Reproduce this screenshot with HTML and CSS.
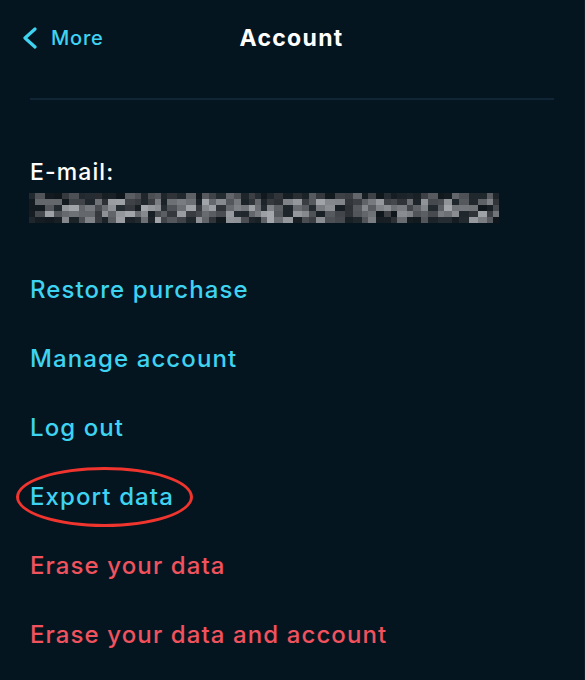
FILE: index.html
```html
<!DOCTYPE html>
<html lang="en">
<head>
<meta charset="utf-8">
<title>Account</title>
<link rel="stylesheet" href="styles.css">
</head>
<body>
<div class="screen">
  <header class="topbar">
    <div class="bar">
      <a class="back" href="#">
        <svg class="chev" width="14" height="22" viewBox="0 0 14 22"><polyline points="12,2 2,11 12,20" fill="none" stroke="#3fd3f2" stroke-width="3.2" stroke-linecap="round" stroke-linejoin="round"/></svg>
        <span>More</span>
      </a>
      <h1 class="title">Account</h1>
      <span class="spacer"></span>
    </div>
  </header>
  <section class="email">
    <div class="label">E-mail:</div>
    <canvas id="mosaic" class="mosaic" width="470" height="30"></canvas>
  </section>
  <ul class="actions">
    <li class="item cyan">Restore purchase</li>
    <li class="item cyan">Manage account</li>
    <li class="item cyan">Log out</li>
    <li class="item cyan marked">Export data<span class="ring"></span></li>
    <li class="item red">Erase your data</li>
    <li class="item red">Erase your data and account</li>
  </ul>
</div>
<script src="script.js"></script>
</body>
</html>
```
FILE: styles.css
```css
html, body {
  margin: 0;
  padding: 0;
  background: #051520;
}
.screen {
  width: 585px;
  height: 680px;
  overflow: hidden;
  background: #051520;
  font-family: Inter, "Noto Sans", sans-serif;
  border-right: 1px solid #0c1e2a;
  box-sizing: border-box;
}
.topbar {
  height: 98px;
  margin: 0 30px 0 30px;
  border-bottom: 2px solid #102536;
  box-sizing: content-box;
}
.bar {
  display: grid;
  grid-template-columns: 1fr auto 1fr;
  align-items: center;
  height: 36px;
  padding-top: 20px;
  margin-left: -7px;
  margin-right: -30px;
}
.back {
  display: flex;
  align-items: center;
  gap: 14px;
  color: #3fd3f2;
  text-decoration: none;
  font-size: 20px;
  font-weight: 500;
  letter-spacing: 0.8px;
}
.chev {
  display: block;
}
.title {
  margin: 0;
  color: #ffffff;
  font-size: 23px;
  font-weight: 700;
  letter-spacing: 1.3px;
  transform: translateX(-12px);
}
.email {
  padding: 57px 0 0 30px;
}
.label {
  color: #ffffff;
  font-size: 23px;
  line-height: 30px;
  font-weight: 500;
  letter-spacing: 1.1px;
}
.mosaic {
  display: block;
  margin: 6px 0 0 -1px;
  width: 470px;
  height: 30px;
}
.actions {
  list-style: none;
  margin: 32px 0 0 0;
  padding: 0;
}
.item {
  position: relative;
  padding-left: 30px;
  font-size: 24px;
  font-weight: 500;
  line-height: 69px;
  letter-spacing: 1.1px;
}
.cyan {
  color: #3fd3f2;
}
.red {
  color: #f0525e;
}
.ring {
  position: absolute;
  left: 16px;
  top: 5px;
  width: 177px;
  height: 60px;
  box-sizing: border-box;
  border: 3.5px solid #f0342e;
  border-radius: 50%;
  pointer-events: none;
}
```
FILE: script.js
```js
(function () {
  var c = document.getElementById('mosaic');
  var ctx = c.getContext('2d');
  var seed = 1337;
  function rnd() {
    seed = (seed * 16807) % 2147483647;
    return (seed - 1) / 2147483646;
  }
  var rows = 5, rh = 6;
  var gaps = [[0, 4], [255, 262], [470, 480]];
  var x = 0;
  while (x < 470) {
    var w = 6 + Math.floor(rnd() * 5);
    for (var r = 0; r < rows; r++) {
      var p = r === 0 ? 0.55 : (r === 4 ? 0.4 : 0.15);
      var inGap = false;
      for (var g = 0; g < gaps.length; g++) {
        if (x >= gaps[g][0] && x < gaps[g][1]) inGap = true;
      }
      if (inGap || rnd() < p) {
        var d = 14 + Math.floor(rnd() * 24);
        ctx.fillStyle = 'rgb(' + d + ',' + (d + 8) + ',' + (d + 14) + ')';
      } else {
        var v = 45 + Math.floor(rnd() * 120);
        if (r === 0) v = 40 + Math.floor(rnd() * 60);
        ctx.fillStyle = 'rgb(' + v + ',' + (v + 4) + ',' + (v + 8) + ')';
      }
      ctx.fillRect(x, r * rh, w, rh);
    }
    x += w;
  }
})();
```
